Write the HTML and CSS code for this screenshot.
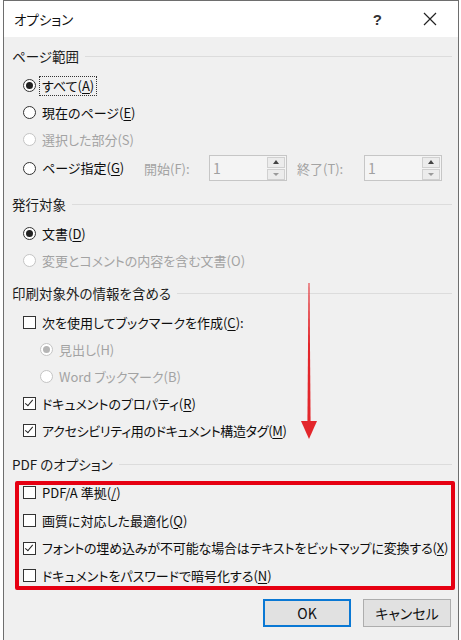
FILE: index.html
```html
<!DOCTYPE html>
<html lang="ja">
<head>
<meta charset="utf-8">
<title>オプション</title>
<link rel="stylesheet" href="styles.css">
</head>
<body>
<div class="window">
  <div class="titlebar">
    <span class="title">オプション</span>
    <span class="help">?</span>
    <span class="close"><svg width="14" height="14" viewBox="0 0 14 14"><path d="M1 1L13 13M13 1L1 13" stroke="#222" stroke-width="1.2" fill="none"/></svg></span>
  </div>
  <div class="content">
    <div class="group g1">
      <div class="ghead"><span>ページ範囲</span><i></i></div>
      <div class="row"><span class="radio on"></span><span class="lbl focus">すべて(<u>A</u>)</span></div>
      <div class="row"><span class="radio"></span><span class="lbl">現在のページ(<u>E</u>)</span></div>
      <div class="row dis"><span class="radio"></span><span class="lbl">選択した部分(S)</span></div>
      <div class="row prow">
        <span class="radio"></span><span class="lbl plbl">ページ指定(<u>G</u>)</span>
        <span class="flab dis start">開始(F):</span>
        <span class="num"><span class="val">1</span><span class="spin"><b class="up"></b><b class="dn"></b></span></span>
        <span class="flab dis end">終了(T):</span>
        <span class="num"><span class="val">1</span><span class="spin"><b class="up"></b><b class="dn"></b></span></span>
      </div>
    </div>
    <div class="group g2">
      <div class="ghead"><span>発行対象</span><i></i></div>
      <div class="row"><span class="radio on"></span><span class="lbl">文書(<u>D</u>)</span></div>
      <div class="row dis"><span class="radio"></span><span class="lbl">変更とコメントの内容を含む文書(O)</span></div>
    </div>
    <div class="group g3">
      <div class="ghead"><span>印刷対象外の情報を含める</span><i></i></div>
      <div class="row"><span class="check"></span><span class="lbl">次を使用してブックマークを作成(<u>C</u>):</span></div>
      <div class="row dis ind"><span class="radio on"></span><span class="lbl">見出し(H)</span></div>
      <div class="row dis ind"><span class="radio"></span><span class="lbl">Word ブックマーク(B)</span></div>
      <div class="row"><span class="check on"></span><span class="lbl">ドキュメントのプロパティ(<u>R</u>)</span></div>
      <div class="row"><span class="check on"></span><span class="lbl kana">アクセシビリティ用のドキュメント構造タグ(<u>M</u>)</span></div>
    </div>
    <div class="group g4">
      <div class="ghead"><span>PDF のオプション</span><i></i></div>
      <div class="pdfbox">
        <div class="boxrows">
          <div class="row"><span class="check"></span><span class="lbl">PDF/A 準拠(<u>/</u>)</span></div>
          <div class="row"><span class="check"></span><span class="lbl">画質に対応した最適化(<u>Q</u>)</span></div>
          <div class="row"><span class="check on"></span><span class="lbl long">フォントの埋め込みが不可能な場合はテキストをビットマップに変換する(<u>X</u>)</span></div>
          <div class="row"><span class="check"></span><span class="lbl">ドキュメントをパスワードで暗号化する(<u>N</u>)</span></div>
        </div>
      </div>
    </div>
    <div class="buttons">
      <button class="btn ok">OK</button>
      <button class="btn">キャンセル</button>
    </div>
  </div>
  <svg class="arrow" width="26" height="162" viewBox="0 0 26 162"><polygon points="12.5,3 13.5,3 14.6,144 11.4,144" fill="#e3262b"/><polygon points="5,141 21,141 13,159" fill="#e3262b"/></svg>
</div>
</body>
</html>
```

FILE: styles.css
```css
html, body {
  margin: 0;
  background: #ffffff;
}
body {
  font-family: "Noto Sans CJK JP", "Noto Sans", sans-serif;
  font-size: 13px;
  font-feature-settings: "palt";
  color: #0d0d0d;
}
.window {
  position: relative;
  margin-left: 3px;
  width: 454px;
  height: 639px;
  border: 1px solid #6e6e6e;
  border-bottom: 0;
  background: #f0f0f0;
  overflow: hidden;
}
.titlebar {
  height: 36px;
  background: #fff;
  display: flex;
  align-items: center;
  padding-left: 10px;
}
.title {
  flex: 1;
  font-size: 13.5px;
  color: #111;
}
.help {
  font-size: 15px;
  font-weight: bold;
  color: #333;
  margin-right: 41px;
  font-family: "Liberation Sans", sans-serif;
}
.close {
  display: flex;
  margin-right: 21px;
}
.content {
  padding: 9px 6px 0 8px;
}
.ghead {
  display: flex;
  align-items: center;
  height: 20px;
  margin-bottom: 6px;
  color: #1a1a1a;
  font-size: 13.5px;
}
.ghead i {
  flex: 1;
  height: 1px;
  background: #dcdcdc;
  margin-left: 6px;
}
.g2 { margin-top: 11px; }
.g3 { margin-top: 9px; }
.g4 { margin-top: 10px; }
.row {
  display: flex;
  align-items: center;
  height: 27px;
  padding-left: 11px;
  white-space: nowrap;
}
.row.ind { padding-left: 28px; }
.row.prow { height: 30px; }
.dis, .row.dis .lbl { color: #a3a3a3; }
.lbl {
  margin-left: 6px;
  line-height: 18px;
}
.lbl.kana { letter-spacing: -0.3px; }
.lbl.long { letter-spacing: -0.15px; }
.lbl u { text-underline-offset: 2px; }
.focus {
  outline: 1px dotted #333;
  outline-offset: 0px;
  padding: 0 2px;
  margin-left: 4px;
}
.radio {
  width: 13px;
  height: 13px;
  box-sizing: border-box;
  border: 1px solid #333;
  border-radius: 50%;
  background: #fff;
  display: flex;
  align-items: center;
  justify-content: center;
  flex: none;
}
.radio.on::after {
  content: "";
  width: 7px;
  height: 7px;
  border-radius: 50%;
  background: #222;
}
.row.dis .radio { border-color: #c4c4c4; }
.row.dis .radio.on::after { background: #b5b5b5; }
.check {
  width: 13px;
  height: 13px;
  box-sizing: border-box;
  border: 1px solid #333;
  background: #fff;
  flex: none;
  position: relative;
}
.check.on::after {
  content: "";
  position: absolute;
  left: 3px;
  top: 0px;
  width: 3px;
  height: 7px;
  border: solid #222;
  border-width: 0 1.5px 1.5px 0;
  transform: rotate(40deg);
}
.plbl { width: 86px; }
.flab { width: 55px; margin-left: 16px; }
.flab.end { width: 56px; margin-left: 10px; }
.num {
  width: 78px;
  height: 26px;
  box-sizing: border-box;
  border: 1px solid #c6c6c6;
  background: #f4f4f4;
  margin-left: 10px;
  display: flex;
  align-items: center;
  justify-content: space-between;
  padding: 0 1px 0 3px;
  font-size: 14px;
}
.val { color: #a0a0a0; }
.spin {
  display: flex;
  flex-direction: column;
  gap: 1px;
}
.spin b {
  width: 18px;
  height: 11px;
  box-sizing: border-box;
  border: 1px solid #d0d0d0;
  background: #ececec;
  display: flex;
  align-items: center;
  justify-content: center;
}
.spin b::after {
  content: "";
  border-left: 3px solid transparent;
  border-right: 3px solid transparent;
}
.spin .up::after { border-bottom: 4px solid #444; }
.spin .dn::after { border-top: 3px solid #9a9a9a; }
.flab.end + .num { margin-left: 11px; }
.pdfbox {
  margin: 7px -3px 0 3px;
  border: 4px solid #e60012;
  border-radius: 2px;
}
.boxrows {
  margin: -6px 0 -4px 0;
}
.boxrows .row {
  padding-left: 4px;
  height: 27.7px;
}
.buttons {
  display: flex;
  justify-content: flex-end;
  gap: 12px;
  margin-top: 9px;
  margin-right: 1px;
}
.btn {
  width: 88px;
  height: 28px;
  box-sizing: border-box;
  border: 1px solid #adadad;
  background: #e1e1e1;
  font-family: "Noto Sans CJK JP", sans-serif;
  font-feature-settings: "palt";
  font-size: 14px;
  color: #111;
  padding: 0;
}
.btn.ok {
  border: 2px solid #0a78d4;
}
.arrow {
  position: absolute;
  left: 292px;
  top: 279px;
}
```
